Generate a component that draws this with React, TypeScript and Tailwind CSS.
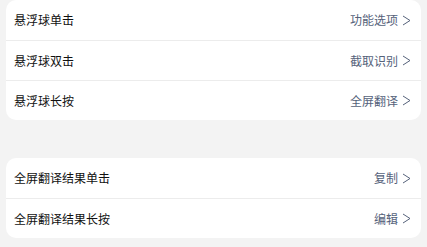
const font = {
  fontFamily: '"Noto Sans CJK SC", "Noto Sans", sans-serif',
};

type Row = { title: string; value: string };

const groups: Row[][] = [
  [
    { title: "悬浮球单击", value: "功能选项" },
    { title: "悬浮球双击", value: "截取识别" },
    { title: "悬浮球长按", value: "全屏翻译" },
  ],
  [
    { title: "全屏翻译结果单击", value: "复制" },
    { title: "全屏翻译结果长按", value: "编辑" },
  ],
];

function Chevron() {
  return (
    <svg width="9" height="11" viewBox="0 0 9 11" className="ml-[4px]">
      <polyline points="1,1 8,5.5 1,10" fill="none" stroke="#55627a" strokeWidth="1" />
    </svg>
  );
}

function Card({ rows }: { rows: Row[] }) {
  return (
    <div className="bg-white rounded-[10px] mx-[6px] overflow-hidden">
      {rows.map((row, i) => (
        <div
          key={row.title}
          className={`flex items-center justify-between h-[40px] pl-[8px] pr-[10px] ${
            i > 0 ? "border-t border-[#ececec]" : ""
          }`}
        >
          <span className="text-[12px] text-[#111111]">{row.title}</span>
          <span className="flex items-center text-[12px] text-[#55627a]">
            {row.value}
            <Chevron />
          </span>
        </div>
      ))}
    </div>
  );
}

export default function App() {
  return (
    <div className="w-[427px] h-[247px] bg-[#f3f3f3] flex flex-col gap-[38px]" style={font}>
      <Card rows={groups[0]} />
      <Card rows={groups[1]} />
    </div>
  );
}
